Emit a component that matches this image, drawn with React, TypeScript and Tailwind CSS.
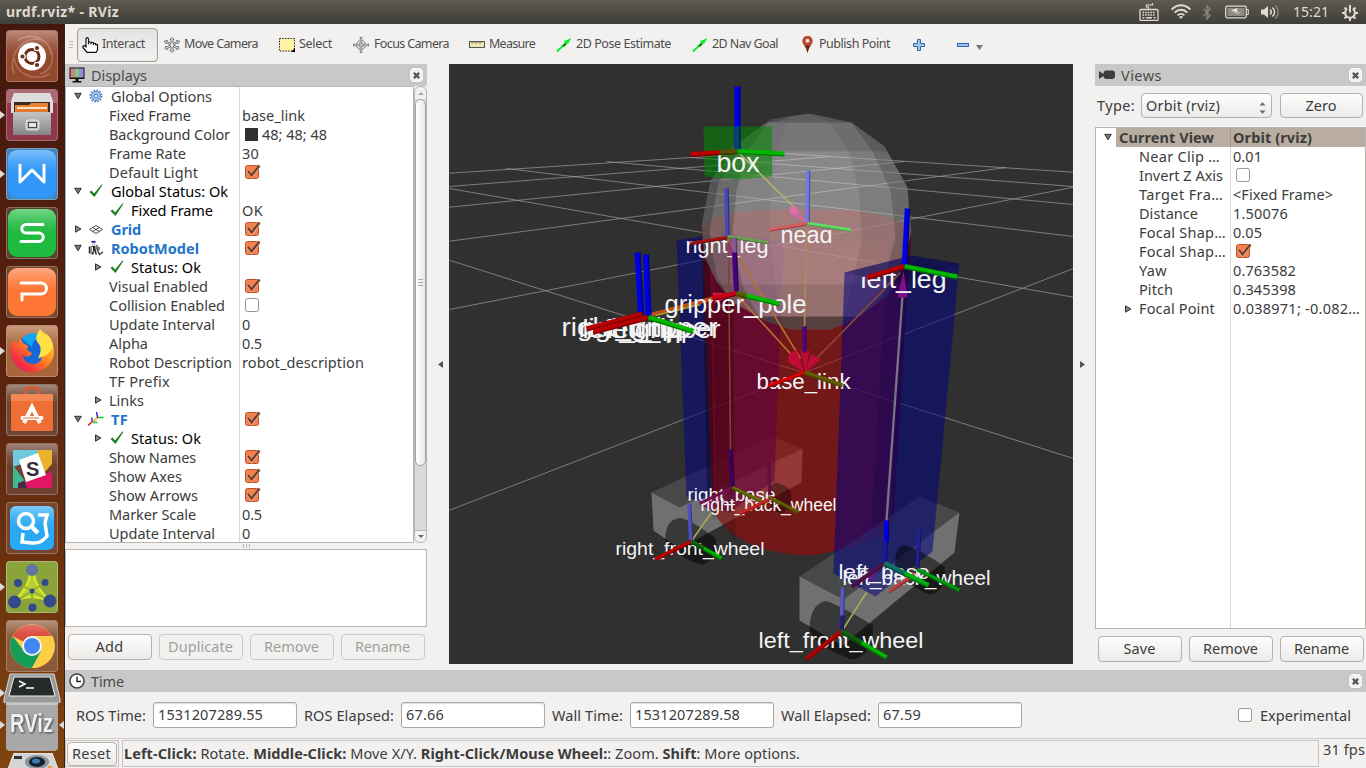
import React, { ReactNode, useLayoutEffect, useRef } from "react";

/* Text set to a given advance width by spreading the difference over its letters. */
function Fit({ w, className = "", children }: { w: number; className?: string; children: ReactNode }) {
  const ref = useRef<HTMLSpanElement>(null);
  useLayoutEffect(() => {
    const el = ref.current;
    if (!el) return;
    el.style.letterSpacing = "0px";
    const natural = el.getBoundingClientRect().width;
    const count = (el.textContent || "").length || 1;
    el.style.letterSpacing = `${(w - natural) / count}px`;
  }, [w]);
  return (
    <span ref={ref} className={`inline-block shrink-0 whitespace-pre ${className}`}>
      {children}
    </span>
  );
}

/* ---------- top panel ---------- */

function TopBar() {
  return (
    <header className="flex h-6 w-full shrink-0 items-center bg-gradient-to-b from-[#5e5b50] to-[#3f3e39] pl-[6px] pr-2 text-[#dfdbd2]">
      <Fit w={113} className="text-[14px] font-bold">urdf.rviz* - RViz</Fit>
      <div className="ml-auto flex items-center">
        <svg className="h-[18px] w-5" viewBox="0 0 20 18" fill="none" stroke="#dfdbd2">
          <path d="M9.5 6V4h-2V2h6V0" strokeWidth="1.2" />
          <rect x="1" y="6.5" width="18" height="11" rx="1" strokeWidth="1.3" />
          <path d="M3.5 9.5h13M3.5 12h13" strokeWidth="1.6" strokeDasharray="1.6 1" />
          <path d="M3.5 14.7h2M7 14.7h6M14.5 14.7h2" strokeWidth="1.6" />
        </svg>
        <svg className="ml-3 h-4 w-5" viewBox="0 0 20 16" fill="none" stroke="#dfdbd2" strokeWidth="1.9">
          <path d="M.7 5.6C6-.2 14-.2 19.3 5.6" />
          <path d="M3.6 8.6c3.7-3.8 9.1-3.8 12.8 0" />
          <path d="M6.6 11.4c2-2 4.800-2 6.800 0" />
          <path d="M8 12.800L10 15l2-2.200c-1.200-1-2.800-1-4 0z" fill="#dfdbd2" stroke="none" />
        </svg>
        <svg className="ml-3 h-[15px] w-2" viewBox="0 0 8 15" fill="none" stroke="#8b887f" strokeWidth="1.3">
          <path d="M.5 4l6.500 6.500L4 13.800V1.200L7 4.500.500 11" />
        </svg>
        <svg className="ml-[14px] h-[14px] w-6" viewBox="0 0 24 14">
          <rect x=".7" y="1.200" width="20.600" height="11.600" rx="1.500" fill="none" stroke="#dfdbd2" strokeWidth="1.300" />
          <rect x="2.500" y="3" width="17" height="8" fill="#8e8b82" />
          <path d="M22 4.500h1.300v5H22" fill="none" stroke="#dfdbd2" />
          <path d="M5 6l7.500-3-.8 2.800L17.500 10l-8-2.200z" fill="#f2f0ea" />
          <path d="M5 6l6 1 6.500 3" stroke="#55534b" fill="none" strokeWidth=".6" />
        </svg>
        <svg className="ml-3 h-4 w-5" viewBox="0 0 20 16" fill="none" stroke="#dfdbd2" strokeWidth="1.600">
          <path d="M0 5.500h3L7 2v12L3 10.500H0z" fill="#dfdbd2" stroke="none" />
          <path d="M9 5.500c1.500 1.500 1.500 3.500 0 5M11.500 3.500c2.700 2.700 2.700 6.300 0 9" />
          <path d="M14.300 1.500c4 3.800 4 9.200 0 13" stroke="#86837a" />
        </svg>
        <Fit w={36} className="ml-[12px] mr-[1px] text-[14px]">15:21</Fit>
        <svg className="ml-3 h-[17px] w-4" viewBox="0 0 16 17" fill="none" stroke="#dfdbd2">
          <path d="M5.200 4.800a4.900 4.900 0 1 0 5.600 0" strokeWidth="2" />
          <path d="M8 1v7.500" strokeWidth="2" />
          <path d="M0 9h3M13 9h3M2.500 3.500L4.300 5.300M13.500 3.500l-1.800 1.800M2.500 14.500l2-2M13.500 14.500l-2-2M8 14v3" strokeWidth="2" />
        </svg>
      </div>
    </header>
  );
}

/* ---------- launcher ---------- */

function Tile({ bg, pin, children }: { bg: string; pin?: boolean; children: ReactNode }) {
  return (
    <div className="flex h-[52px] w-full shrink-0 items-center">
      <span className={`h-0 w-0 border-y-4 border-l-[5px] border-y-transparent ${pin ? "border-l-[#dcdad6]" : "border-l-transparent"}`} />
      <div className={`ml-px h-[52px] w-[52px] overflow-hidden rounded-[4px] border border-white/25 ${bg}`}>
        <svg viewBox="1 1 50 50" className="h-[50px] w-[50px]">{children}</svg>
      </div>
    </div>
  );
}

function Launcher() {
  return (
    <nav className="flex w-[65px] shrink-0 flex-col gap-[7px] overflow-hidden border-r border-[#38201a] bg-gradient-to-b from-[#43180e] via-[#5c240f] to-[#80440f] pt-[6px]">
      <svg width="0" height="0" className="absolute">
        <defs>
          <linearGradient id="gloss" x1="0" y1="0" x2="0" y2="1"><stop offset="0" stopColor="#fff" stopOpacity=".38" /><stop offset=".6" stopColor="#fff" stopOpacity=".1" /><stop offset="1" stopColor="#fff" stopOpacity="0" /></linearGradient>
          <linearGradient id="cab" x1="0" y1="0" x2="0" y2="1"><stop offset="0" stopColor="#c4c4c4" /><stop offset="1" stopColor="#858585" /></linearGradient>
          <linearGradient id="fox" x1="1" y1="0" x2="0" y2="1"><stop offset="0" stopColor="#ffe93f" /><stop offset=".4" stopColor="#ff8f1f" /><stop offset=".75" stopColor="#f5303f" /><stop offset="1" stopColor="#d0128c" /></linearGradient>
        </defs>
      </svg>

      <Tile bg="bg-[#94492f]">
        <path d="M8 44C2 26 14 10 30 9c9 0 15 8 15 16M12 10c14-8 30-2 34 14 2 10-4 18-12 20M44 44c-16 8-34 0-36-16" fill="none" stroke="#c79683" strokeWidth="1.500" opacity=".5" />
        <rect width="52" height="26" fill="url(#gloss)" />
        <circle cx="26" cy="26.500" r="14" fill="#fff" />
        <circle cx="26" cy="26.500" r="7" fill="none" stroke="#6b2c18" strokeWidth="3" />
        <g stroke="#fff" strokeWidth="1.200" fill="#6b2c18"><circle cx="16.500" cy="26.500" r="2.700" /><circle cx="31" cy="18" r="2.700" /><circle cx="31" cy="35" r="2.700" /></g>
      </Tile>
      <Tile bg="bg-[#8e3848]" pin>
        <rect width="52" height="14" fill="#fff" opacity=".25" />
        <path d="M8 4h36l3 8v12H5V12z" fill="#dedede" />
        <rect x="8" y="13" width="36" height="11" fill="#3a2b22" />
        <path d="M9 24v-8h14l2-2h17v10z" fill="#e8833a" /><path d="M11 18h30v5H11z" fill="#f8e0c0" /><path d="M11 20h30v4H11z" fill="#e07a30" />
        <path d="M7 23h38v23H7z" fill="url(#cab)" />
        <rect x="20" y="31" width="13" height="10" rx="2" fill="#bdbdbd" stroke="#e8e8e8" />
        <rect x="22.500" y="33.500" width="8" height="5" fill="#e8e8e8" stroke="#444" />
      </Tile>
      <Tile bg="bg-[#4583b4]" pin>
        <rect x="2" y="2" width="48" height="48" rx="9" fill="#3096f8" /><rect x="2" y="2" width="48" height="24" rx="9" fill="url(#gloss)" />
        <path d="M14 17v17l12-12 12 12V17" fill="none" stroke="#fff" strokeWidth="3" strokeLinejoin="round" strokeLinecap="round" />
      </Tile>
      <Tile bg="bg-[#5c4030]">
        <rect x="2" y="2" width="48" height="48" rx="9" fill="#1fbb40" /><rect x="2" y="2" width="48" height="24" rx="9" fill="url(#gloss)" />
        <path d="M37 17.500H20a4 4 0 0 0 0 8.500h13a4 4 0 0 1 0 8.500H15" fill="none" stroke="#fff" strokeWidth="3" strokeLinecap="round" />
      </Tile>
      <Tile bg="bg-[#74462f]">
        <rect x="2" y="2" width="48" height="48" rx="9" fill="#fd7633" /><rect x="2" y="2" width="48" height="24" rx="9" fill="url(#gloss)" />
        <path d="M15 17h20a4 4 0 0 1 0 11H16v6" fill="none" stroke="#fff" strokeWidth="3" strokeLinecap="round" />
      </Tile>
      <Tile bg="bg-[#a96439]" pin>
        <rect width="52" height="26" fill="url(#gloss)" />
        <circle cx="26" cy="27" r="17" fill="#1668d8" /><path d="M16 14c6-8 16-8 22 0-8-2-12 2-12 8z" fill="#13a6f0" />
        <path d="M6 16c-4 14 2 30 19 31 14 1 23-10 23-20 0-9-4-13-10-18 3 6-1 10-3 14 4 10-1 16-8 16-6 0-10-4-10-9 3 3 8 2 9-2l-5-3 1-4-5-3-3-5-2 5z" fill="url(#fox)" />
        <path d="M34 4c-4 6-5 10-2 14 4 4 3 10 0 15 8-1 14-6 15-13-1-6-5-11-9-12z" fill="#ffe047" />
      </Tile>
      <Tile bg="bg-[#6f4634]">
        <rect width="52" height="20" fill="url(#gloss)" />
        <path d="M19 12V8q0-4 4-4h6q4 0 4 4v4" fill="none" stroke="#d8593a" strokeWidth="3" />
        <path d="M5 10h42v37H5z" fill="#ee6e35" /><path d="M5 10h42v7H5z" fill="#f89262" opacity=".7" />
        <path d="M18 39l8-16 8 16" fill="none" stroke="#fff" strokeWidth="4" /><path d="M16.500 34h19" stroke="#fff" strokeWidth="4" strokeLinecap="round" /><path d="M17 34h16" stroke="#ee6e35" strokeWidth="1.200" />
      </Tile>
      <Tile bg="bg-[#6f4030]">
        <rect width="52" height="22" fill="url(#gloss)" />
        <path d="M7 7h26l-6 10-20 7z" fill="#6ecadc" /><path d="M32 7h14v14l-8 9-9-10z" fill="#e9b32d" /><path d="M46 29v16H21l-2-8z" fill="#e01765" /><path d="M7 22l11 15-5 8H7z" fill="#3eb890" /><path d="M12 40l6-2 3 7h-9z" fill="#472a49" />
        <path d="M13 17l19-7 8 22-20 7z" fill="#fff" />
        <text x="20" y="33" fontSize="20" fontWeight="bold" fontFamily="Liberation Sans, sans-serif" fill="#3a2c3c">S</text>
      </Tile>
      <Tile bg="bg-[#74462f]">
        <rect x="4" y="4" width="44" height="44" rx="6" fill="#29a9f3" /><rect x="4" y="4" width="44" height="22" rx="6" fill="url(#gloss)" />
        <circle cx="20" cy="19" r="7.500" fill="none" stroke="#fff" strokeWidth="3.500" /><path d="M25 24l7 7" stroke="#fff" strokeWidth="4.500" />
        <path d="M32 13h9l-2 8 2 13q-6 8-15 7l-10-1 1-9" fill="none" stroke="#fff" strokeWidth="3.500" />
      </Tile>
      <Tile bg="bg-[#8aa33d]" pin>
        <path d="M24.500 12Q22 28 8 40q17-8 36 0Q30 28 27.500 12z" fill="#b9d034" />
        <path d="M24.500 12Q22 28 8 40q17-8 36 0Q30 28 27.500 12" fill="none" stroke="#d3e52c" strokeWidth="2.500" />
        <path d="M26 30l-14-8M26 30l13-8.500M26 30v16M26 30L9 41M26 30l18 10" stroke="#8fae34" strokeWidth="2" />
        <g fill="#35488c"><circle cx="26" cy="9" r="6" fill="#5f74a0" /><circle cx="8.500" cy="41" r="6.500" /><circle cx="44" cy="40" r="6.500" /><circle cx="12" cy="22" r="4" /><circle cx="39" cy="21.500" r="3.500" /><circle cx="26" cy="30" r="2.500" /><circle cx="26.500" cy="46.500" r="4" /></g>
      </Tile>
      <Tile bg="bg-[#8a5938]">
        <circle cx="26" cy="26" r="22" fill="#fdce45" />
        <path d="M26 26L6.500 16A22 22 0 0 1 45.500 16H26z" fill="#db4437" /><path d="M6.500 16A22 22 0 0 0 26 48l9-17-9-5-8 5z" fill="#149d59" />
        <path d="M26 16h20.500A22 22 0 0 1 26 48l9.500-17z" fill="#fdce45" /><rect width="52" height="20" fill="url(#gloss)" />
        <circle cx="26" cy="26" r="10" fill="#f2f2f2" /><circle cx="26" cy="26" r="8" fill="#4486f4" />
      </Tile>

      <div className="-mt-[6px] flex flex-col">
        <svg className="h-[30px] w-16" viewBox="0 0 64 30">
          <path d="M10 1h44l6 25v4H4v-4z" fill="#9a9a98" stroke="#d5d5d3" /><path d="M14 4h36l5 19H9z" fill="#272a2a" stroke="#eee" />
          <path d="M19 8l6 3-6 3M26 15h8" fill="none" stroke="#fff" strokeWidth="1.500" /><path d="M0 16l5 4-5 4z" fill="#dcdad6" />
        </svg>
        <svg className="h-12 w-16" viewBox="0 0 64 48">
          <rect x="6" width="52" height="48" rx="4" fill="#a9a7a7" /><rect x="6" width="52" height="2" fill="#c8c6c6" />
          <text x="10" y="29" fontSize="25" fontWeight="bold" textLength="43" lengthAdjust="spacingAndGlyphs" fontFamily="Liberation Sans, sans-serif" fill="#f0f0f0" className="drop-shadow-[1px_1px_1px_#444]">RViz</text>
          <path d="M0 18l5 4-5 4zM64 18l-5 4 5 4z" fill="#dcdad6" />
        </svg>
        <svg className="mt-[2px] h-4 w-16" viewBox="0 0 64 16">
          <path d="M14 0h38l6 16H8z" fill="#d4d4d4" stroke="#eee" /><ellipse cx="37" cy="9" rx="12" ry="7" fill="#8b9499" /><ellipse cx="37" cy="9" rx="8" ry="5" fill="#16202c" /><ellipse cx="36" cy="8" rx="4" ry="2.500" fill="#3c79b0" />
          <path d="M14 3h8v3h-8z" fill="#333" /><path d="M48 13h4v3h-4z" fill="#e9a23a" />
        </svg>
      </div>
    </nav>
  );
}

/* ---------- toolbar ---------- */

function Crosshair() {
  return (
    <svg className="h-4 w-4" viewBox="0 0 16 16" fill="none" stroke="#777">
      <circle cx="8" cy="8" r="4.500" /><circle cx="8" cy="8" r="2" /><path d="M8 0v16M0 8h16" strokeWidth="2.400" /><path d="M8 1v14M1 8h14" stroke="#eee" strokeWidth=".8" />
    </svg>
  );
}
function GreenArrow() {
  return (
    <svg className="h-[14px] w-4" viewBox="0 0 16 14"><path d="M0 13L9 4.500 7.500 3.500 15.500 0 12 6l-1.300-.8L2 14z" fill="#00f428" /><path d="M6 8l3-3 2 1-3 3z" fill="#1c7a24" /></svg>
  );
}

function Toolbar() {
  return (
    <div className="flex h-10 shrink-0 items-center pt-px text-[12.500px] text-[#4c4c4c]">
      <div className="ml-1 flex w-2 flex-col gap-[2px]">
        <i className="h-px w-1 bg-[#bbb]" /><i className="h-px w-1 bg-[#bbb]" /><i className="h-px w-1 bg-[#bbb]" />
      </div>
      <div className="flex h-[34px] w-[81px] items-center rounded-[4px] border border-[#a39f9a] bg-gradient-to-b from-[#e6e4e2] to-[#f4f3f1] pl-1 shadow-[inset_0_0_1px_#b5b1ac]">
        <svg className="h-4 w-[17px]" viewBox="0 0 17 16"><path d="M4 10V2.500Q4 .7 5.200.7T6.500 2.500V7V5h2.500v2-1.500h2.500V7.500 6.500h2.200V8l1.800-.5V13L14 15.300H5L1 10.500V9l1.500-.5z" fill="#fff" stroke="#111" strokeWidth="1.200" strokeLinejoin="round" /></svg>
        <Fit w={43} className="ml-[3px]">Interact</Fit>
      </div>
      <svg className="ml-[6px] h-4 w-4" viewBox="0 0 16 16" fill="none" stroke="#555" strokeWidth=".8">
        <path d="M8 .5l2 2H9v4l4-2-.3-1.300 3 1-1.700 2.500-.3-1L9.500 8l4 2 .5-1 1 3-3 .3.500-1L9 9.500v4h1L8 15.500 6 13.500h1v-4l-3.500 1.800.5 1-3-.3 1-3 .500 1 4-2-4.200-2.300-.300 1L.3 4.200l3-1L3 4.500l4 2v-4H6z" fill="#eee" />
      </svg>
      <Fit w={74} className="ml-1 mr-px">Move Camera</Fit>
      <svg className="ml-[20px] h-[14px] w-4" viewBox="0 0 16 14"><rect x=".5" y=".5" width="15" height="12.500" fill="#fff3a5" stroke="#222" strokeDasharray="1.500 1.200" /><path d="M16 10v4h-4z" fill="#000" /></svg>
      <Fit w={33} className="ml-1 mr-px">Select</Fit>
      <div className="ml-5"><Crosshair /></div>
      <Fit w={75} className="ml-[5px] mr-px">Focus Camera</Fit>
      <svg className="ml-[19px] h-[7px] w-4" viewBox="0 0 16 7"><rect x=".5" y=".5" width="15" height="6" fill="#f2e7b2" stroke="#555" /><path d="M3 0v3M5 0v2M7 0v3M9 0v2M11 0v3M13 0v2" stroke="#555" strokeWidth=".8" /></svg>
      <Fit w={46} className="ml-1 mr-px">Measure</Fit>
      <div className="ml-[20px]"><GreenArrow /></div>
      <Fit w={95} className="ml-1 mr-px">2D Pose Estimate</Fit>
      <div className="ml-[20px]"><GreenArrow /></div>
      <Fit w={66} className="ml-1 mr-px">2D Nav Goal</Fit>
      <svg className="ml-[23px] h-[17px] w-[11px]" viewBox="0 0 11 17"><path d="M5.500 17Q4.500 12 1.500 8.500.300 7 .300 5A5.200 5.200 0 0 1 10.700 5q0 2-1.200 3.500Q6.500 12 5.500 17z" fill="#b8492c" /><path d="M5.500 17Q5 13 3 9.500h5Q6 13 5.500 17z" fill="#63261a" /><circle cx="5.500" cy="4.800" r="2" fill="#f6ddd4" /></svg>
      <Fit w={71} className="ml-[6px] mr-px">Publish Point</Fit>
      <svg className="ml-[22px] h-3 w-3" viewBox="0 0 12 12"><path d="M4.500.5h3v4h4v3h-4v4h-3v-4h-4v-3h4z" fill="#a4c3ea" stroke="#2f66ae" /></svg>
      <svg className="ml-[32px] h-1 w-3" viewBox="0 0 12 4"><rect x=".5" y=".5" width="11" height="3" fill="#a4c3ea" stroke="#2f66ae" /></svg>
      <svg className="ml-[7px] mt-1.5 h-[5px] w-[7px]" viewBox="0 0 7 5"><path d="M0 0h7L3.500 5z" fill="#777" /></svg>
    </div>
  );
}

/* ---------- common widgets ---------- */

function DockHeader({ icon, title, w }: { icon: ReactNode; title: string; w: number }) {
  return (
    <div className="flex h-[22px] shrink-0 items-center bg-[#c8c8c8] pl-1 pr-[4px] text-[14.500px] text-[#4c4c4c]">
      <span className="w-[22px]">{icon}</span>
      <Fit w={w}>{title}</Fit>
      <span className="ml-auto flex h-[14px] w-[13px] items-center justify-center rounded-[3px] border border-[#f8f8f8] bg-[#f0f0f0] shadow-[0_0_1px_#888]">
        <svg className="h-[7px] w-[7px]" viewBox="0 0 8 8"><path d="M1 1l6 6M7 1L1 7" stroke="#555" strokeWidth="2.600" /></svg>
      </span>
    </div>
  );
}

function Btn({ label, w, off, cls = "h-[26px] w-[84px]" }: { label: string; w: number; off?: boolean; cls?: string }) {
  return (
    <button className={`flex shrink-0 items-center justify-center rounded-[4px] border pb-px pr-px text-[14.500px] ${cls} ${off ? "border-[#cfccc9] bg-[#f2f1f0] text-[#a19f9c]" : "border-[#b4b0ab] bg-gradient-to-b from-[#fdfdfd] to-[#ecebe9] text-[#3c3c3c]"}`}>
      <Fit w={w}>{label}</Fit>
    </button>
  );
}

function Check({ on }: { on?: boolean }) {
  return (
    <svg className="h-[16px] w-[17px] shrink-0" viewBox="0 0 17 16">
      {on ? (
        <>
          <rect x="1.500" y="1.500" width="13" height="13" rx="2" fill="#f4814e" stroke="#b9512c" />
          <path d="M4 7l3.500 5L15.500 2" fill="none" stroke="#fbb493" strokeWidth="3.200" />
          <path d="M4 6.800l3.500 4.700L15.500 1.500" fill="none" stroke="#6b4030" strokeWidth="2.200" />
        </>
      ) : (
        <rect x="1.500" y="1.500" width="13" height="13" rx="2" fill="#fff" stroke="#989490" />
      )}
    </svg>
  );
}

function Twist({ open }: { open: boolean }) {
  return (
    <svg className="h-2 w-2" viewBox="0 0 8 8">
      {open ? <path d="M.7 1.300h6.600L4 6.800z" fill="#777" stroke="#333" /> : <path d="M1.500.8v6.400L7 4z" fill="#888" stroke="#333" />}
    </svg>
  );
}

type IconKind = "gear" | "ok" | "grid" | "robot" | "tf";
function RowIcon({ kind }: { kind: IconKind }) {
  if (kind === "gear")
    return <svg className="h-[14px] w-[14px]" viewBox="0 0 14 14"><circle cx="7" cy="7" r="5.800" fill="none" stroke="#5a8ac8" strokeWidth="1.600" strokeDasharray="1.700 1.300" /><circle cx="7" cy="7" r="4.600" fill="#a9c6ea" stroke="#4a7dc0" strokeWidth=".9" /><circle cx="7" cy="7" r="2" fill="#dce8f6" stroke="#3d73b8" strokeWidth=".9" /></svg>;
  if (kind === "ok")
    return <svg className="h-[14px] w-[14px]" viewBox="0 0 14 14"><path d="M.5 8l2-1.500L5 9.500 12.500.5l1 .3L5.500 13z" fill="#1d7c1d" /></svg>;
  if (kind === "grid")
    return <svg className="h-[9px] w-[14px]" viewBox="0 0 14 9" fill="none" stroke="#3c3c3c" strokeWidth=".9"><path d="M7 .5l6.500 4L7 8.500.5 4.500zM3.700 2.500l6.600 4M10.300 2.500l-6.600 4" /></svg>;
  if (kind === "robot")
    return <svg className="h-4 w-4" viewBox="0 0 16 16"><ellipse cx="5.500" cy="1.800" rx="2.500" ry="1.100" fill="#2430a8" /><path d="M3.500 3.500h4v2h-4z" fill="#ccc" /><path d="M.8 6.500h1.700v7H.8zM3.500 6h4v3l1.500 5.500H7.500L6 10l-.5 4.500H3.500z" fill="#222" /><path d="M9 5v4l2.500 5.500L15 12M11 7v3" fill="none" stroke="#333" strokeWidth="1.300" /><path d="M4.500 7v5" stroke="#eee" /></svg>;
  return <svg className="h-[14px] w-4" viewBox="0 0 16 14" fill="none" strokeWidth="1.400"><path d="M9.500 5L8.500 0M4 10V5.500" stroke="#2020f0" /><path d="M10 5.500h5.500M5 10.500h4.500" stroke="#10d020" /><path d="M0 13.500L4 10M5.500 9.500L10 5" stroke="#e81010" /><path d="M6 9l3-3" stroke="#f0e020" /></svg>;
}

type Row = { t: string; w: number; twist?: boolean; icon?: IconKind; sub?: boolean; tone?: string; v?: string; vw?: number; check?: boolean; swatch?: boolean };

const BLUE = "font-bold text-[#2275c9]";
const ROWS: Row[] = [
  { t: "Global Options", w: 101, twist: true, icon: "gear" },
  { t: "Fixed Frame", w: 82, sub: true, v: "base_link", vw: 63 },
  { t: "Background Color", w: 121, sub: true, v: "48; 48; 48", vw: 65, swatch: true },
  { t: "Frame Rate", w: 77, sub: true, v: "30", vw: 17 },
  { t: "Default Light", w: 89, sub: true, check: true },
  { t: "Global Status: Ok", w: 117, twist: true, icon: "ok", tone: "text-black" },
  { t: "Fixed Frame", w: 82, sub: true, icon: "ok", tone: "text-black", v: "OK", vw: 21 },
  { t: "Grid", w: 30, twist: false, icon: "grid", tone: BLUE, check: true },
  { t: "RobotModel", w: 88, twist: true, icon: "robot", tone: BLUE, check: true },
  { t: "Status: Ok", w: 70, sub: true, twist: false, icon: "ok", tone: "text-black" },
  { t: "Visual Enabled", w: 99, sub: true, check: true },
  { t: "Collision Enabled", w: 116, sub: true, check: false },
  { t: "Update Interval", w: 106, sub: true, v: "0", vw: 8 },
  { t: "Alpha", w: 39, sub: true, v: "0.5", vw: 20 },
  { t: "Robot Description", w: 123, sub: true, v: "robot_description", vw: 122 },
  { t: "TF Prefix", w: 61, sub: true },
  { t: "Links", w: 35, sub: true, twist: false },
  { t: "TF", w: 17, twist: true, icon: "tf", tone: BLUE, check: true },
  { t: "Status: Ok", w: 70, sub: true, twist: false, icon: "ok", tone: "text-black" },
  { t: "Show Names", w: 87, sub: true, check: true },
  { t: "Show Axes", w: 73, sub: true, check: true },
  { t: "Show Arrows", w: 89, sub: true, check: true },
  { t: "Marker Scale", w: 87, sub: true, v: "0.5", vw: 20 },
  { t: "Update Interval", w: 106, sub: true, v: "0", vw: 8 },
];

function TreeRow({ r }: { r: Row }) {
  return (
    <div className={`flex h-[19px] shrink-0 items-center ${r.tone || ""}`}>
      <div className={`flex w-[173px] shrink-0 items-center ${r.sub ? "pl-[24px]" : "pl-1"}`}>
        <span className={`flex w-[15px] shrink-0 justify-center pb-px ${r.sub ? "mr-1" : "mr-[3px]"}`}>
          {r.twist !== undefined && <Twist open={r.twist} />}
        </span>
        {r.icon && <span className={`flex w-4 shrink-0 justify-center pb-px ${r.sub ? "mr-[6px]" : "mr-[7px]"}`}><RowIcon kind={r.icon} /></span>}
        <Fit w={r.w}>{r.t}</Fit>
      </div>
      <div className="flex items-center pl-[3px] font-normal text-[#3c3c3c]">
        {r.check !== undefined && <span className="ml-[2px] pb-px"><Check on={r.check} /></span>}
        {r.swatch && <i className="ml-[3px] mr-1 h-[13px] w-[13px] bg-[#303030]" />}
        {r.v && <Fit w={r.vw || 20}>{r.v}</Fit>}
      </div>
    </div>
  );
}

function Displays() {
  return (
    <section className="flex w-[362px] shrink-0 flex-col">
      <DockHeader title="Displays" w={56} icon={
        <svg className="h-4 w-4" viewBox="0 0 16 16"><rect x=".5" y=".5" width="15" height="11.500" fill="#111" /><path d="M1.500 1.500h4.500v9H1.500z" fill="#cf8080" /><path d="M6 1.500h4v9H6z" fill="#80c880" /><path d="M10 1.500h4.500v9H10z" fill="#9090dc" /><path d="M6.500 12h3v2h3v1.500h-9V14h3z" fill="#111" /></svg>
      } />
      <div className="flex h-[457px] shrink-0">
        <div className="flex w-[349px] flex-col overflow-hidden border border-[#b9b5b1] bg-white bg-[linear-gradient(to_right,transparent_173px,#dcdad8_173px,#dcdad8_174px,transparent_174px)] text-[14.500px] text-[#3c3c3c]">
          {ROWS.map((r, i) => <TreeRow key={i} r={r} />)}
        </div>
        <div className="flex w-[13px] flex-col rounded-[6px] border border-[#b9b5b1] bg-[#dbd9d7]">
          <div className="flex h-3 items-center justify-center rounded-t-[6px] bg-[#f2f1f0]"><i className="border-x-[3px] border-b-[3px] border-x-transparent border-b-[#aaa]" /></div>
          <div className="flex h-[367px] flex-col items-center justify-center gap-[2px] rounded-[6px] border border-[#a5a19d] bg-gradient-to-r from-white to-[#eae8e6]">
            <i className="h-px w-[5px] bg-[#aaa]" /><i className="h-px w-[5px] bg-[#aaa]" /><i className="h-px w-[5px] bg-[#aaa]" />
          </div>
          <div className="mt-auto flex h-3 items-center justify-center rounded-b-[6px] border-t border-[#b9b5b1] bg-[#f2f1f0]"><i className="border-x-[3px] border-t-[3px] border-x-transparent border-t-[#666]" /></div>
        </div>
      </div>
      <div className="flex h-[6px] items-center justify-center gap-[2px]">
        <i className="h-1 w-px bg-[#bbb]" /><i className="h-1 w-px bg-[#bbb]" /><i className="h-1 w-px bg-[#bbb]" />
      </div>
      <div className="h-[78px] border border-[#b9b5b1] bg-white" />
      <div className="mt-[7px] flex gap-[7px] pl-[3px]">
        <Btn label="Add" w={28} /><Btn label="Duplicate" w={65} off /><Btn label="Remove" w={55} off /><Btn label="Rename" w={55} off />
      </div>
    </section>
  );
}

/* ---------- 3D view ---------- */

type Line = [number, number, number, number];
const GRID: Line[] = [
  [449, 172.700, 768, 152], [449, 186, 830, 156], [449, 206.700, 904, 161], [449, 240.700, 1006, 167], [449, 309, 1073, 186.700], [449, 509.700, 1073, 268],
  [768, 152, 1073, 171.700], [690, 157, 1073, 186], [606, 161, 1073, 204], [505.700, 168, 1073, 236], [449, 188, 1073, 296.700], [449, 259.700, 1073, 458],
];

function Rod({ l, c, w = 5 }: { l: Line; c: string; w?: number }) {
  const [x1, y1, x2, y2] = l;
  const vertical = Math.abs(x2 - x1) < Math.abs(y2 - y1);
  return (
    <g>
      <line x1={x1} y1={y1} x2={x2} y2={y2} stroke={c} strokeWidth={w} />
      <line x1={x1 + (vertical ? w / 2.600 : 0)} y1={y1 + (vertical ? 0 : w / 2.600)} x2={x2 + (vertical ? w / 2.600 : 0)} y2={y2 + (vertical ? 0 : w / 2.600)} stroke="#000" strokeOpacity=".35" strokeWidth={w / 4} />
    </g>
  );
}

function Label({ x, y, w, s, clip, children }: { x: number; y: number; w: number; s: number; clip?: string; children: string }) {
  return (
    <text x={x} y={y} fontSize={s} textLength={w} lengthAdjust="spacingAndGlyphs" fill="#f4f4f4" fontFamily="Liberation Sans, sans-serif" clipPath={clip}>{children}</text>
  );
}

const R = "#b80000", G = "#00b800", B = "#0000e6";

function Scene() {
  return (
    <svg className="h-[600px] w-[624px] shrink-0 bg-[#303030]" viewBox="448.5 63.5 624 600">
      <defs>
        <clipPath id="cHead"><rect x="770" y="229.500" width="80" height="30" /></clipPath>
        <clipPath id="cRleg"><rect x="680" y="239.500" width="100" height="30" /></clipPath>
        <clipPath id="cLleg"><path d="M855 278l50-10 50 8v30H855z" /></clipPath>
        <clipPath id="cSphere"><path d="M808.700 113L770 119 732 147 710 181 704 210 701 226 704 256 716 281 733 302 764 320 790 329h40l26-11 30-22 17-31 8-34-4-44-23-41-33-24z" /></clipPath>
      </defs>
      <g stroke="#a0a0a0" strokeOpacity=".68" strokeWidth="1">
        {GRID.map((l, i) => <line key={i} x1={l[0]} y1={l[1]} x2={l[2]} y2={l[3]} />)}
      </g>

      {/* rear base */}
      <path d="M651 492L771 436 802 448 679 507z" fill="#606060" fillOpacity=".5" />
      <path d="M651 492L679 507 802 448 801 482 679 548 653 530z" fill="#b0b0b0" fillOpacity=".5" />

      {/* right leg */}
      <path d="M676 240L726 232 783 240 774 480 729 512 686 496z" fill="#000082" fillOpacity=".52" />
      <path d="M710 240h22v252l-20 8z" fill="#000" fillOpacity=".22" />

      {/* body cylinder */}
      <path d="M701 226Q712 211 770 209h70Q900 213 911 232L893 516Q885 545 808 555 735 552 712 510z" fill="#b60000" fillOpacity=".5" />
      <path d="M701 226l8 6 5 288-7-20zM911 232l-10 6-10 280-9 14 11-16z" fill="#000" fillOpacity=".35" />
      <path d="M901 238l-13 5-18 297 21-20z" fill="#000" fillOpacity=".15" />
      <path d="M714 240h18l3 300-20-25z" fill="#000" fillOpacity=".16" />
      <path d="M701 226Q712 211 770 209h70Q900 213 911 232q-20 10-60 11H756q-40-3-55-17z" fill="#000" fillOpacity=".1" />

      {/* head */}
      <g clipPath="url(#cSphere)">
        <rect x="700" y="110" width="215" height="225" fill="#d8d8d8" fillOpacity=".52" />
        <path d="M700 110h215v12H700z" fill="#000" fillOpacity=".2" />
        <path d="M700 110h215v41H700z" fill="#000" fillOpacity=".12" />
        <path d="M700 284h215v50H700z" fill="#000" fillOpacity=".1" />
        <path d="M735 316h150v14H735z" fill="#000" fillOpacity=".42" />
        <path d="M808 113L829 122 848 151 859 194 861 240 851 285 841 330h80V110z" fill="#000" fillOpacity=".08" />
        <path d="M829 118L851 122 872 151 890 190 895 236 883 285 860 316 840 330h80V110z" fill="#000" fillOpacity=".16" />
        <path d="M851 122L888 146 907 188 909 231 900 265 885 290 870 312h60V110z" fill="#000" fillOpacity=".18" />
        <path d="M788 122L776 151 771 194 770 240 775 285 785 330H690V110z" fill="#000" fillOpacity=".04" />
        <path d="M790 118L768 122 746 151 736 190 732 236 742 285 758 316 775 330h-85V110z" fill="#000" fillOpacity=".18" />
        <path d="M738 151L718 182 709 230 716 275 735 310h-40V130z" fill="#000" fillOpacity=".2" />
      </g>
      <path d="M703 126h68.500v50l-34 3-33.500-3z" fill="#008800" fillOpacity=".56" />

      {/* left leg and base */}
      <path d="M799 576L919 496 959 512 843 599z" fill="#606060" fillOpacity=".5" />
      <path d="M799 576L843 599 959 512 954 552 842 645 799 620z" fill="#b0b0b0" fillOpacity=".5" />
      <path d="M844 272L911 255 959 263 932 551 875 596 833 573z" fill="#000082" fillOpacity=".53" />
      <path d="M844 272L911 255 959 263 903 284z" fill="#000" fillOpacity=".16" />

      {/* wheels */}
      <g fill="#000" fillOpacity=".5">
        <path d="M665 540Q664 520 679 517.500q8 0 36 20 3 20-11 26-4 1-12-2-24-13-27-21.500z" />
        <path d="M809 630Q809 604 825 600.500q10 2 47 24 3 25-17 34-5 1-10-2-30-12-36-26.500z" />
        <path d="M895 568q-2-22 9-23 12 2 40 21 2 20-10 27-6 2-12-2-22-12-27-23z" />
        <path d="M768 495q0-12 8-13 14 4 15 12 0 14-10 19-12-2-13-18z" fillOpacity=".35" />
      </g>

      {/* links between frames */}
      <g fill="none" strokeWidth="1.600">
        <path d="M738 152L797 210" stroke="#b4b46c" /><path d="M806 228L804 326" stroke="#b0885c" />
        <path d="M727 238L800 358M735 293L798 362" stroke="#b8702c" /><path d="M900 272L812 362" stroke="#8c4c30" />
        <path d="M728 246L730 450" stroke="#84403c" /><path d="M902 295L886 520" stroke="#777783" strokeWidth="2.300" />
        <path d="M843 628L866 592M692 539L711 512" stroke="#a8a85c" />
        <path d="M648 315L712 298" stroke="#b85018" strokeWidth="4" /><path d="M655 315L700 304" stroke="#a8a030" />
      </g>
      <path d="M789 208l6-3 12 18-14-7z" fill="#c86c9c" /><circle cx="793" cy="210" r="4" fill="#e070a8" />
      <path d="M712 292l24 1-22 10z" fill="#d0104c" />
      <path d="M897 297h10l-4-27z" fill="#80108c" />
      <path d="M788 354l8-5 8 23-16-10zM800 350h9l-4 22zM811 354l9 5-16 13z" fill="#c00c34" />
      <path d="M724 253l9 0-4-14z" fill="#8c3c70" />
      <path d="M884 563l-26 12 10 9z" fill="#58208c" /><path d="M731 488l-20 22-12-6z" fill="#781850" />

      {/* frame names */}
      <Label x={716} y={171} w={43} s={27}>box</Label>
      <Label x={780} y={242} w={52} s={23} clip="url(#cHead)">head</Label>
      <Label x={685} y={252} w={83} s={21.500} clip="url(#cRleg)">right_leg</Label>
      <Label x={860} y={287} w={86} s={26} clip="url(#cLleg)">left_leg</Label>
      <Label x={664} y={312} w={142} s={25.500}>gripper_pole</Label>
      <Label x={561} y={335} w={156} s={26}>right_gripper</Label>
      <Label x={582} y={337} w={138} s={26}>left_gripper</Label>
      <Label x={578} y={336} w={104} s={26}>right_tip</Label>
      <Label x={606} y={337} w={84} s={26}>left_tip</Label>
      <Label x={756} y={388.500} w={94} s={22}>base_link</Label>
      <Label x={687} y={500.500} w={88} s={19}>right_base</Label>
      <Label x={700} y={510} w={136} s={18}>right_back_wheel</Label>
      <Label x={615} y={554} w={149} s={19}>right_front_wheel</Label>
      <Label x={838} y={578} w={91} s={20.500}>left_base</Label>
      <Label x={842} y={584} w={148} s={20}>left_back_wheel</Label>
      <Label x={758} y={647} w={165} s={22.500}>left_front_wheel</Label>

      {/* axes */}
      <Rod l={[737, 151, 737, 86]} c={B} w={6} /><Rod l={[737, 151, 737, 126]} c="#004878" w={5} /><Rod l={[737, 151, 690, 154]} c={R} /><Rod l={[737, 151, 719, 152]} c="#585008" /><Rod l={[737, 151, 784, 153.500]} c={G} />
      <Rod l={[807, 223, 807.500, 170]} c="#7878e4" w={4.500} /><Rod l={[807, 223, 769, 229.500]} c="#d85c5c" w={3.500} /><Rod l={[807, 223, 850, 229.500]} c="#60dc60" w={3.500} />
      <Rod l={[727, 237, 726, 188]} c="#4848b8" w={4.500} /><Rod l={[727, 237, 690, 243]} c="#a01414" w={3.500} /><Rod l={[727, 236, 767, 242]} c="#6ca04c" w={3.500} />
      <Rod l={[735, 266, 734, 237]} c="#845898" w={4.500} /><Rod l={[736, 293, 734, 252]} c="#460080" w={5} /><Rod l={[736, 293, 712, 298]} c="#c40014" /><Rod l={[736, 293, 779, 303.500]} c={G} /><Rod l={[736, 293, 746, 295.500]} c="#5c5c00" />
      <Rod l={[640.500, 314, 637, 252]} c={B} w={6} /><Rod l={[648, 316, 645.500, 254]} c={B} w={6} />
      <Rod l={[642, 313.500, 586, 328.500]} c={R} w={5} /><Rod l={[648, 317, 593, 331.500]} c={R} w={5} /><Rod l={[648, 317, 693, 331]} c={G} />
      <Rod l={[904, 266, 907, 208]} c={B} w={5.500} /><Rod l={[904, 266, 867, 277]} c={R} /><Rod l={[904, 266, 957, 276.500]} c={G} />
      <Rod l={[804, 352, 804, 326]} c="#500080" w={4} /><Rod l={[804, 372, 768, 385.500]} c="#d80000" w={4} /><Rod l={[804, 372, 842, 385]} c="#606000" w={4} />
      <Rod l={[732, 487, 730, 449]} c="#3c0068" w={4} /><Rod l={[732, 487, 699, 503]} c="#78104c" w={3} /><Rod l={[732, 487, 765, 503]} c="#607000" w={3.500} />
      <Rod l={[769, 495, 768, 460]} c="#6c1040" w={3} /><Rod l={[769, 499, 739, 513.500]} c="#c82424" w={3.500} /><Rod l={[769, 497, 798, 512]} c="#606000" w={3.500} />
      <Rod l={[690.500, 540, 688.700, 503]} c="#5050c4" w={4} /><Rod l={[691, 541, 654.500, 559]} c="#b80000" w={4} /><Rod l={[691, 541, 721, 558]} c="#00b000" w={4} /><Rod l={[691, 541, 703, 548]} c="#106010" w={4} />
      <Rod l={[919, 528, 917, 567]} c="#202090" w={4} /><Rod l={[914, 574, 889, 591]} c="#b44040" w={4} /><Rod l={[917, 569, 959, 590]} c="#009c10" w={4} />
      <Rod l={[886, 542, 886, 520]} c={B} /><Rod l={[884, 563, 885, 541]} c="#1818a0" /><Rod l={[884, 563, 851, 586]} c="#501048" w={4} /><Rod l={[884, 563, 928, 585]} c="#00b414" /><Rod l={[884, 563, 904, 573]} c="#107068" />
      <Rod l={[841, 630, 842.500, 587]} c="#5858c4" w={4.500} /><Rod l={[841, 630, 841.500, 615]} c="#242470" w={4.500} /><Rod l={[841, 631, 806, 658.500]} c={R} w={4.500} /><Rod l={[841, 631, 886, 657]} c={G} w={4.500} /><Rod l={[841, 631, 861, 642]} c="#106010" w={4.500} />
    </svg>
  );
}

/* ---------- views panel ---------- */

const VIEW_ROWS: { t: string; w: number; v?: string; vw?: number; check?: boolean; twist?: boolean }[] = [
  { t: "Near Clip …", w: 81, v: "0.01", vw: 29 },
  { t: "Invert Z Axis", w: 84, check: false },
  { t: "Target Fra…", w: 84, v: "<Fixed Frame>", vw: 100 },
  { t: "Distance", w: 59, v: "1.50076", vw: 55 },
  { t: "Focal Shap…", w: 87, v: "0.05", vw: 29 },
  { t: "Focal Shap…", w: 87, check: true },
  { t: "Yaw", w: 28, v: "0.763582", vw: 63 },
  { t: "Pitch", w: 34, v: "0.345398", vw: 63 },
  { t: "Focal Point", w: 76, v: "0.038971; -0.082…", vw: 127, twist: true },
];

function Views() {
  return (
    <section className="flex w-[271px] shrink-0 flex-col text-[14.500px] text-[#3c3c3c]">
      <DockHeader title="Views" w={41} icon={<svg className="h-2.5 w-4" viewBox="0 0 16 10"><rect x="4.500" y=".5" width="11.500" height="8.500" rx="3" fill="#3c3c3c" /><path d="M0 1l6 4-6 4z" fill="#3c3c3c" /></svg>} />
      <div className="mt-[7px] flex items-center pl-[2px]">
        <Fit w={38}>Type:</Fit>
        <div className="ml-[6px] flex h-[25px] w-[131px] items-center rounded-[4px] border border-[#b4b0ab] bg-gradient-to-b from-[#fdfdfd] to-[#ecebe9] pl-1 pr-[5px]">
          <Fit w={74}>Orbit (rviz)</Fit>
          <svg className="ml-auto mt-1 h-3 w-[7px]" viewBox="0 0 7 12"><path d="M.5 3.500h6L3.500.3zM.5 8.500h6l-3 3.200z" fill="#666" /></svg>
        </div>
        <span className="ml-2"><Btn label="Zero" w={31} cls="h-[25px] w-[83px]" /></span>
      </div>
      <div className="mt-[9px] h-[502px] border border-[#b9b5b1] bg-white bg-[linear-gradient(to_right,transparent_134px,#dcdad8_134px,#dcdad8_135px,transparent_135px)]">
        <div className="flex h-[19px] items-center font-bold">
          <span className="flex w-5 justify-center pb-px pl-1"><Twist open /></span>
          <div className="flex h-[19px] flex-1 items-center bg-[#b9aca1]">
            <div className="flex h-[19px] w-[115px] items-center border-r border-[#a5988e] pl-[3px]"><Fit w={95}>Current View</Fit></div>
            <Fit w={79} className="ml-[2px]">Orbit (rviz)</Fit>
          </div>
        </div>
        {VIEW_ROWS.map((r, i) => (
          <div key={i} className="flex h-[19px] items-center">
            <span className="flex w-[43px] shrink-0 justify-end pr-[7px]">{r.twist && <Twist open={false} />}</span>
            <span className="w-[92px] shrink-0"><Fit w={r.w}>{r.t}</Fit></span>
            <span className="ml-[2px]">{r.v ? <Fit w={r.vw || 20}>{r.v}</Fit> : <span className="ml-[2px] block pb-px"><Check on={r.check} /></span>}</span>
          </div>
        ))}
      </div>
      <div className="mt-[7px] flex gap-[7px] pl-[3px]">
        <Btn label="Save" w={32} /><Btn label="Remove" w={55} /><Btn label="Rename" w={55} />
      </div>
    </section>
  );
}

/* ---------- time panel and status bar ---------- */

function Field({ label, lw, value, vw }: { label: string; lw: number; value: string; vw: number }) {
  return (
    <div className="mr-[7px] flex items-center">
      <Fit w={lw}>{label}</Fit>
      <div className="ml-[7px] flex h-[26px] w-[144px] items-center rounded-[3px] border border-[#aaa6a2] bg-white pb-px pl-1 shadow-[inset_0_1px_1px_#ddd]"><Fit w={vw}>{value}</Fit></div>
    </div>
  );
}

function TimePanel() {
  return (
    <section className="flex h-[68px] shrink-0 flex-col text-[14.500px] text-[#3c3c3c]">
      <DockHeader title="Time" w={33} icon={<svg className="h-4 w-4" viewBox="0 0 16 16"><circle cx="8" cy="8" r="7" fill="#fff" stroke="#444" strokeWidth="1.600" /><path d="M8 3.500V8.500h4" fill="none" stroke="#222" strokeWidth="1.400" /></svg>} />
      <div className="flex flex-1 items-center pl-[11px] pr-[15px]">
        <Field label="ROS Time:" lw={70} value="1531207289.55" vw={105} />
        <Field label="ROS Elapsed:" lw={90} value="67.66" vw={38} />
        <Field label="Wall Time:" lw={71} value="1531207289.58" vw={105} />
        <Field label="Wall Elapsed:" lw={90} value="67.59" vw={38} />
        <span className="ml-auto mr-[6px] pb-px"><Check /></span>
        <Fit w={91}>Experimental</Fit>
      </div>
    </section>
  );
}

function StatusBar() {
  return (
    <footer className="flex h-[30px] shrink-0 items-center border-t border-[#cfccc9] text-[14.500px] text-[#3c3c3c]">
      <div className="flex h-[27px] w-[54px] items-center justify-center border border-[#c5c2bf]"><Btn label="Reset" w={39} cls="h-6 w-[50px]" /></div>
      <div className="ml-[3px] flex h-[27px] w-[1197px] items-center border border-[#c5c2bf] pl-[1px]">
        <Fit w={676}><b>Left-Click:</b> Rotate. <b>Middle-Click:</b> Move X/Y. <b>Right-Click/Mouse Wheel:</b>: Zoom. <b>Shift</b>: More options.</Fit>
      </div>
      <Fit w={42} className="mb-2 ml-[4px]">31 fps</Fit>
    </footer>
  );
}

function Gutter({ left }: { left?: boolean }) {
  return (
    <div className={`flex w-[22px] shrink-0 items-center ${left ? "justify-end pr-[6px]" : "justify-start pl-[7px]"}`}>
      <svg className="h-[7px] w-[5px]" viewBox="0 0 5 7">{left ? <path d="M5 0v7L0 3.500z" fill="#555" /> : <path d="M0 0v7l5-3.500z" fill="#555" />}</svg>
    </div>
  );
}

export default function App() {
  return (
    <div className="flex h-[768px] w-[1366px] flex-col overflow-hidden bg-[#f2f1f0] font-['Noto_Sans','Open_Sans',sans-serif] leading-none">
      <TopBar />
      <div className="flex min-h-0 flex-1">
        <Launcher />
        <main className="flex w-[1301px] flex-col">
          <Toolbar />
          <div className="flex h-[606px] shrink-0">
            <Displays />
            <div className="flex h-[600px]"><Gutter left /><Scene /><Gutter /></div>
            <Views />
          </div>
          <TimePanel />
          <StatusBar />
        </main>
      </div>
    </div>
  );
}
